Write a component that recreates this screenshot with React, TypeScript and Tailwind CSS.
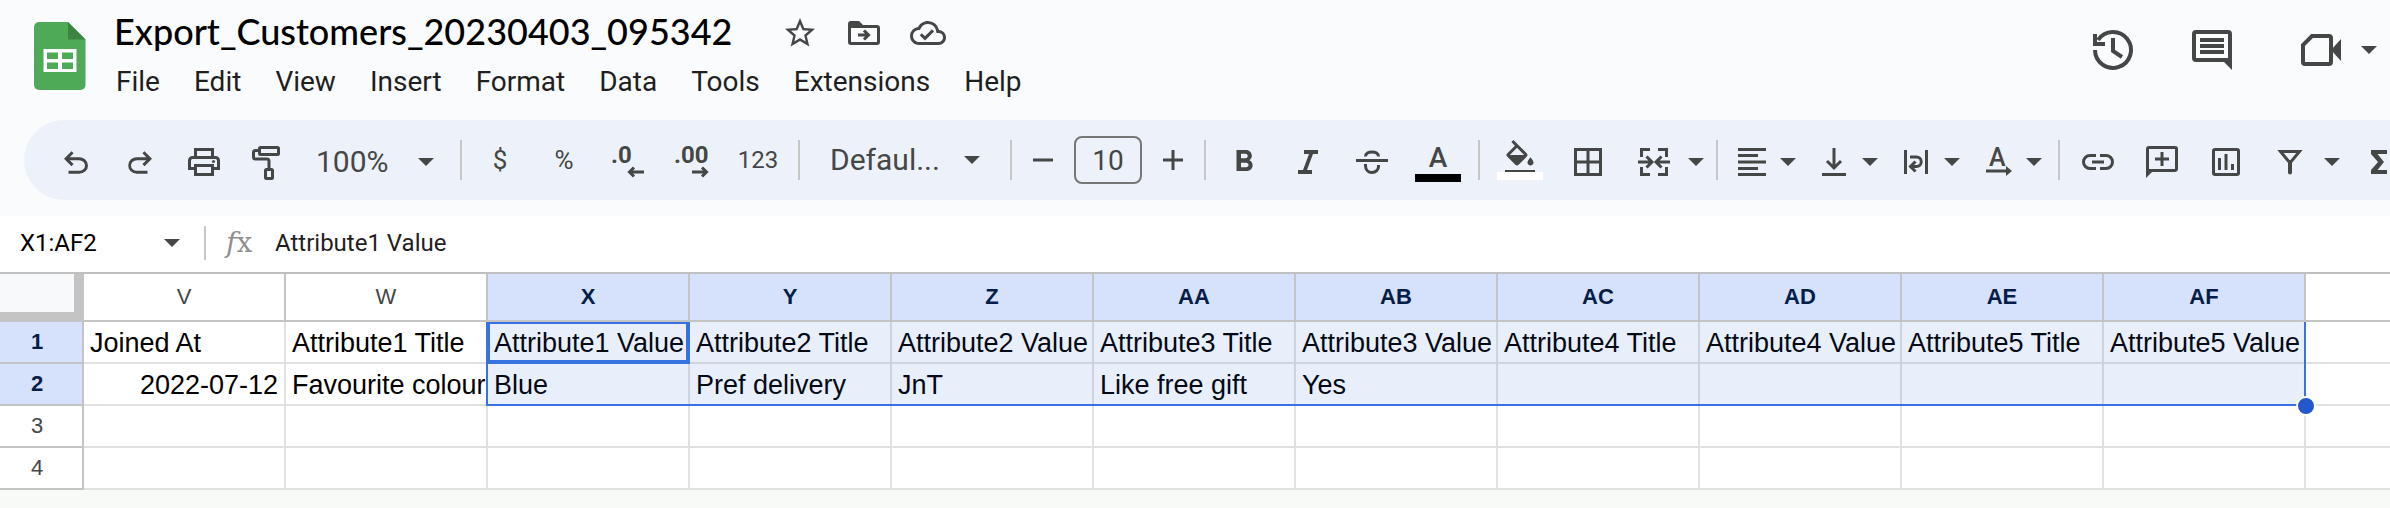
import type { ReactNode } from 'react';
import { MdFormatBold, MdFormatColorFill, MdOutlineCloudDone, MdStarBorder } from 'react-icons/md';

const MENUS = ['File', 'Edit', 'View', 'Insert', 'Format', 'Data', 'Tools', 'Extensions', 'Help'];

const COLUMNS = ['V', 'W', 'X', 'Y', 'Z', 'AA', 'AB', 'AC', 'AD', 'AE', 'AF'];

const ROWS = [
  [
    'Joined At',
    'Attribute1 Title',
    'Attribute1 Value',
    'Attribute2 Title',
    'Attribute2 Value',
    'Attribute3 Title',
    'Attribute3 Value',
    'Attribute4 Title',
    'Attribute4 Value',
    'Attribute5 Title',
    'Attribute5 Value',
  ],
  ['2022-07-12', 'Favourite colour', 'Blue', 'Pref delivery', 'JnT', 'Like free gift', 'Yes'],
  [],
  [],
];

const FIRST_SELECTED_COL = 2;
const LAST_SELECTED_ROW = 1;

export default function App() {
  return (
    <div className="min-h-screen overflow-hidden bg-[#f8faf7] font-['Roboto',sans-serif] text-[#444746]">
      <header className="bg-[#f9fbfd] pb-4">
        <TitleBar />
        <Toolbar />
      </header>
      <FormulaBar />
      <Sheet />
    </div>
  );
}

function TitleBar() {
  return (
    <div className="flex h-[120px] items-start pl-[34px] pr-[13px]">
      <SheetsLogo />
      <div className="ml-6 pt-1.5">
        <div className="flex items-center">
          <h1 className="pl-1 font-['Lato',sans-serif] text-[36px] font-medium leading-[50px] text-black">
            Export_Customers_20230403_095342
          </h1>
          <div className="ml-[50px] flex items-center gap-7 pt-1">
            <button aria-label="Star">
              <MdStarBorder size={36} />
            </button>
            <button aria-label="Move">
              <Icon>
                <path
                  d="M2 9a3 3 0 0 1 3-3h8l4 4h14a3 3 0 0 1 3 3v14a3 3 0 0 1-3 3H5a3 3 0 0 1-3-3zM5 13v14h26V13z"
                  fill="currentColor"
                  fillRule="evenodd"
                  stroke="none"
                />
                <path d="M12 20h10M18 15.5l4.5 4.5-4.5 4.5" />
              </Icon>
            </button>
            <button aria-label="Document status">
              <MdOutlineCloudDone size={36} />
            </button>
          </div>
        </div>
        <nav className="flex gap-[34px] pl-1.5 text-[28px] leading-[52px] text-[#1f1f1f]">
          {MENUS.map((m) => (
            <button key={m}>{m}</button>
          ))}
        </nav>
      </div>
      <div className="ml-auto flex items-center pt-[26px]">
        <button aria-label="Version history">
          <Icon size={48} stroke={4}>
            <path d="M6 24A18 18 0 1 0 9 14M6 8v10h10M24 12v13l9 6" />
          </Icon>
        </button>
        <button aria-label="Comments" className="ml-[51px]">
          <Icon size={48} stroke={4}>
            <path d="M6 8a2 2 0 0 1 2-2h32a2 2 0 0 1 2 2v26H8a2 2 0 0 1-2-2z" />
            <path d="M12 14h24M12 20h24M12 26h24" />
            <path d="M35 35h9v9z" fill="currentColor" stroke="none" />
          </Icon>
        </button>
        <button aria-label="Join a call" className="ml-[61px] flex items-center gap-4">
          <Icon size={48} stroke={4}>
            <path d="M15 10h17a2 2 0 0 1 2 2v24a2 2 0 0 1-2 2H8a2 2 0 0 1-2-2V19z" />
            <path d="M34 24l10-11v22z" fill="currentColor" stroke="none" />
          </Icon>
          <Caret />
        </button>
      </div>
    </div>
  );
}

function Toolbar() {
  return (
    <div className="ml-6 flex h-20 items-center overflow-hidden rounded-l-full bg-[#edf2fa] pl-5">
      <Tool label="Undo">
        <svg width="36" height="36" viewBox="0 -990 960 960" fill="currentColor">
          <path d="M280-200v-80h284q63 0 109.5-40T720-420q0-60-46.5-100T564-560H312l104 104-56 56-200-200 200-200 56 56-104 104h252q97 0 163.5 63T800-420q0 94-66.5 157T564-200H280Z" />
        </svg>
      </Tool>
      <Tool label="Redo">
        <svg width="36" height="36" viewBox="0 -990 960 960" fill="currentColor">
          <path d="M396-200q-97 0-163.5-63T166-420q0-94 66.5-157T396-640h252L544-744l56-56 200 200-200 200-56-56 104-104H396q-63 0-109.5 40T240-420q0 60 46.5 100T396-280h284v80H396Z" />
        </svg>
      </Tool>
      <Tool label="Print">
        <Icon>
          <path d="M9.5 13V5.5h17V13" />
          <path d="M9.5 24.5h-6v-8a3 3 0 0 1 3-3h23a3 3 0 0 1 3 3v8h-6" />
          <rect x="9.5" y="21.5" width="17" height="9" />
          <circle cx="27.5" cy="17.5" r="1.5" fill="currentColor" stroke="none" />
        </Icon>
      </Tool>
      <Tool label="Paint format">
        <Icon>
          <rect x="9.5" y="3.5" width="19" height="7" rx="1" />
          <path d="M9 6.5H5.5a2 2 0 0 0-2 2V13a2 2 0 0 0 2 2H17a2 2 0 0 1 2 2v8" />
          <rect x="15.5" y="25.5" width="7" height="9" rx="1" />
        </Icon>
      </Tool>
      <div className="relative flex w-[154px] shrink-0 items-center pt-1">
        <select aria-label="Zoom" className="w-full appearance-none bg-transparent pl-4 text-[30px] leading-10">
          <option>100%</option>
        </select>
        <span className="pointer-events-none absolute right-5">
          <Caret />
        </span>
      </div>
      <Divider />
      <button aria-label="Format as currency" className="w-16 shrink-0 text-[26px] leading-9">
        $
      </button>
      <button aria-label="Format as percent" className="w-16 shrink-0 text-[26px] leading-9">
        %
      </button>
      <Tool label="Decrease decimal places">
        <Icon>
          <text x="1" y="19" className="text-[24px] font-bold" fill="currentColor" stroke="none">
            .0
          </text>
          <path d="M34 28H20M24 23.5L19.5 28l4.5 4.5" />
        </Icon>
      </Tool>
      <Tool label="Increase decimal places">
        <Icon>
          <text x="0" y="19" className="text-[24px] font-bold" fill="currentColor" stroke="none">
            .00
          </text>
          <path d="M18 28h14M28 23.5l4.5 4.5-4.5 4.5" />
        </Icon>
      </Tool>
      <button aria-label="More formats" className="w-[68px] shrink-0 text-[24px] leading-9">
        123
      </button>
      <Divider />
      <div className="relative flex w-[198px] shrink-0 items-center">
        <select aria-label="Font" className="w-full appearance-none bg-transparent pl-6 text-[30px] leading-10">
          <option>Defaul...</option>
        </select>
        <span className="pointer-events-none absolute right-6">
          <Caret />
        </span>
      </div>
      <Divider />
      <button aria-label="Decrease font size" className="flex w-[50px] shrink-0 justify-center">
        <Icon>
          <path d="M8 18h20" />
        </Icon>
      </button>
      <input
        aria-label="Font size"
        defaultValue="10"
        className="mx-1.5 h-12 w-[68px] shrink-0 rounded-lg border-2 border-[#747775] bg-transparent text-center text-[28px]"
      />
      <button aria-label="Increase font size" className="flex w-[50px] shrink-0 justify-center">
        <Icon>
          <path d="M8 18h20M18 8v20" />
        </Icon>
      </button>
      <Divider />
      <Tool label="Bold">
        <MdFormatBold size={36} />
      </Tool>
      <Tool label="Italic">
        <Icon>
          <path d="M14 6h14v4h-5l-6 16h5v4H8v-4h5l6-16h-5z" fill="currentColor" stroke="none" />
        </Icon>
      </Tool>
      <Tool label="Strikethrough">
        <Icon>
          <path d="M2 16.5h32M11.5 12.5C11.5 9.5 14.5 8 18 8s6.5 1.5 6.5 4.5M11.5 20v1.5c0 4 2.5 7 6.5 7s6.5-3 6.5-6V21" />
        </Icon>
      </Tool>
      <button aria-label="Text colour" className="flex w-[68px] shrink-0 flex-col items-center pt-1">
        <span className="text-[28px] font-medium leading-8">A</span>
        <span className="h-2 w-[46px] bg-black" />
      </button>
      <Divider />
      <button aria-label="Fill colour" className="flex w-[68px] shrink-0 flex-col items-center">
        <MdFormatColorFill size={36} className="-mb-1" />
        <span className="h-2 w-[46px] bg-white" />
      </button>
      <button aria-label="Borders" className="flex w-[68px] shrink-0 justify-center pt-1">
        <Icon>
          <path d="M5.5 5.5h25v25h-25zM18 5v26M5 18h26" />
        </Icon>
      </button>
      <button aria-label="Merge cells" className="flex w-[88px] shrink-0 items-center gap-4 pl-3.5 pt-1">
        <Icon>
          <path d="M14 5.5H5.5V13M5.5 23v7.5H14M22 5.5h8.5V13M30.5 23v7.5H22" />
          <path d="M2 18h13M10.5 12.5L16 18l-5.5 5.5M34 18H21M25.5 12.5L20 18l5.5 5.5" />
        </Icon>
        <Caret />
      </button>
      <Divider />
      <MenuTool label="Horizontal align">
        <path d="M4 5.5h28M4 11.5h20M4 18h28M4 24.5h20M4 30.5h28" />
      </MenuTool>
      <MenuTool label="Vertical align">
        <path d="M6 30.5h24M18 4v20M11 17l7 7 7-7" />
      </MenuTool>
      <MenuTool label="Text wrapping">
        <path d="M7.5 6v24M28.5 6v24M12 13h6.5a4.5 4.5 0 0 1 0 9.5H13M17.5 17.5l-5 5 5 5" />
      </MenuTool>
      <MenuTool label="Text rotation">
        <text x="9" y="22" className="text-[25px] font-medium" fill="currentColor" stroke="none">
          A
        </text>
        <path d="M6 27h22" />
        <path d="M26 22l6 5-6 5z" fill="currentColor" stroke="none" />
      </MenuTool>
      <Divider />
      <Tool label="Insert link">
        <Icon>
          <path d="M16 11.5h-6a6.5 6.5 0 0 0 0 13h6M20 11.5h6a6.5 6.5 0 0 1 0 13h-6M12 18h12" />
        </Icon>
      </Tool>
      <Tool label="Insert comment">
        <Icon>
          <path d="M3.5 30V5a1.5 1.5 0 0 1 1.5-1.5h26A1.5 1.5 0 0 1 32.5 5v20a1.5 1.5 0 0 1-1.5 1.5H4M18 8v14M11 15h14" />
          <path d="M2 26h8l-8 8z" fill="currentColor" stroke="none" />
        </Icon>
      </Tool>
      <Tool label="Insert chart">
        <Icon>
          <rect x="5.5" y="5.5" width="25" height="25" rx="1.5" />
          <path d="M11.5 14v12M18 10v16M24.5 20v6" />
        </Icon>
      </Tool>
      <button aria-label="Create a filter" className="flex w-[88px] shrink-0 items-center gap-4 pl-3.5 pt-1">
        <Icon>
          <path d="M8.5 7.5h19L18 19z" />
          <path d="M18 18v10.5" strokeWidth="4" strokeLinecap="round" />
        </Icon>
        <Caret />
      </button>
      <Tool label="Functions">
        <Icon>
          <path d="M11 6h16v4H17.5l6.5 8-6.5 8H27v4H11v-4l7-8-7-8z" fill="currentColor" stroke="none" />
        </Icon>
      </Tool>
    </div>
  );
}

function FormulaBar() {
  return (
    <div className="flex h-14 items-center bg-white pb-0.5">
      <div className="relative flex w-[204px] items-center">
        <input
          aria-label="Name box"
          defaultValue="X1:AF2"
          className="w-full pl-5 text-[24px] leading-9 text-black"
        />
        <span className="pointer-events-none absolute right-6">
          <Caret />
        </span>
      </div>
      <span className="h-[34px] w-0.5 bg-[#c7c7c7]" />
      <label
        htmlFor="formula"
        className="w-[69px] pl-5 font-['DejaVu_Serif',serif] text-[28px] leading-9 text-[#8f9190]"
      >
        <i>f</i>x
      </label>
      <input
        id="formula"
        defaultValue="Attribute1 Value"
        className="flex-1 text-[24px] leading-9 text-[#1f1f1f]"
      />
    </div>
  );
}

function Sheet() {
  return (
    <div className="relative border-t-2 border-[#c0c0c0] font-['Liberation_Sans',sans-serif]">
      <table className="w-full table-fixed border-separate border-spacing-0 bg-white">
        <colgroup>
          <col className="w-[84px]" />
          {COLUMNS.map((c) => (
            <col key={c} className="w-[202px]" />
          ))}
          <col />
        </colgroup>
        <thead>
          <tr className="h-12 text-[22px] leading-6">
            <td className="border-b-[10px] border-r-[10px] border-[#c4c4c4] bg-[#f8f9fa]" />
            {COLUMNS.map((c, i) => (
              <th
                key={c}
                scope="col"
                className={
                  i >= FIRST_SELECTED_COL
                    ? 'border-b-2 border-r-2 border-[#c4c4c4] bg-[#d6e1fb] font-bold text-[#041e49]'
                    : 'border-b-2 border-r-2 border-[#c4c4c4] font-normal'
                }
              >
                {c}
              </th>
            ))}
            <td className="border-b-2 border-[#c4c4c4]" />
          </tr>
        </thead>
        <tbody>
          {ROWS.map((row, r) => (
            <tr key={r} className="h-[42px]">
              <th
                scope="row"
                className={
                  r <= LAST_SELECTED_ROW
                    ? 'border-b-2 border-r-2 border-[#c4c4c4] bg-[#d6e1fb] pr-2 text-[22px] font-bold leading-6 text-[#041e49]'
                    : 'border-b-2 border-r-2 border-[#c4c4c4] pr-2 text-[22px] font-normal leading-6'
                }
              >
                {r + 1}
              </th>
              {COLUMNS.map((c, i) => (
                <td
                  key={c}
                  className={`whitespace-nowrap border-b-2 border-r-2 border-[#e1e1e1] px-1.5 pb-0 pt-0.5 text-[27px] leading-8 text-black ${
                    r === 1 && i === 0 ? 'text-right' : ''
                  }`}
                >
                  {row[i]}
                </td>
              ))}
              <td className="border-b-2 border-[#e1e1e1]" />
            </tr>
          ))}
        </tbody>
      </table>
      {/* selected range, active cell and fill handle */}
      <div className="pointer-events-none absolute left-[486px] top-12 h-[84px] w-[1820px] border-x-2 border-b-2 border-[#3871e0] bg-[#1f5fd8]/10">
        <div className="absolute -left-0.5 top-0 h-[42px] w-[204px] border-4 border-t-2 border-[#3871e0]" />
        <div className="absolute -bottom-3 -right-3 size-5 rounded-full border-2 border-white bg-[#2456cc]" />
      </div>
    </div>
  );
}

function Icon({ children, size = 36, stroke = 3 }: { children: ReactNode; size?: number; stroke?: number }) {
  return (
    <svg
      width={size}
      height={size}
      viewBox={`0 0 ${size} ${size}`}
      fill="none"
      stroke="currentColor"
      strokeWidth={stroke}
      className="shrink-0 overflow-visible"
    >
      {children}
    </svg>
  );
}

function Caret() {
  return (
    <svg width="16" height="8" viewBox="0 0 16 8" fill="currentColor" className="shrink-0">
      <path d="M0 0h16L8 8z" />
    </svg>
  );
}

function Tool({ label, children }: { label: string; children: ReactNode }) {
  return (
    <button aria-label={label} className="flex w-16 shrink-0 justify-center pt-1">
      {children}
    </button>
  );
}

function MenuTool({ label, children }: { label: string; children: ReactNode }) {
  return (
    <button aria-label={label} className="flex w-[82px] shrink-0 items-center justify-center gap-2.5 pt-1">
      <Icon>{children}</Icon>
      <Caret />
    </button>
  );
}

function Divider() {
  return <span className="mx-1.5 h-10 w-0.5 shrink-0 bg-[#c7c7c7]" />;
}

function SheetsLogo() {
  return (
    <svg width="52" height="68" viewBox="0 0 52 68" className="mt-[22px] shrink-0">
      <path d="M5 0h29l17.5 17.5V63a5 5 0 0 1-5 5H5a5 5 0 0 1-5-5V5a5 5 0 0 1 5-5z" fill="#4eaa57" />
      <path d="M34 0l17.5 17.5H34z" fill="#3b8442" />
      <path
        d="M9.5 27h33v23h-33zM13 30.5V37h11v-6.5zM28 30.5V37h11v-6.5zM13 40.5V47h11v-6.5zM28 40.5V47h11v-6.5z"
        fill="#fff"
        fillRule="evenodd"
      />
    </svg>
  );
}
